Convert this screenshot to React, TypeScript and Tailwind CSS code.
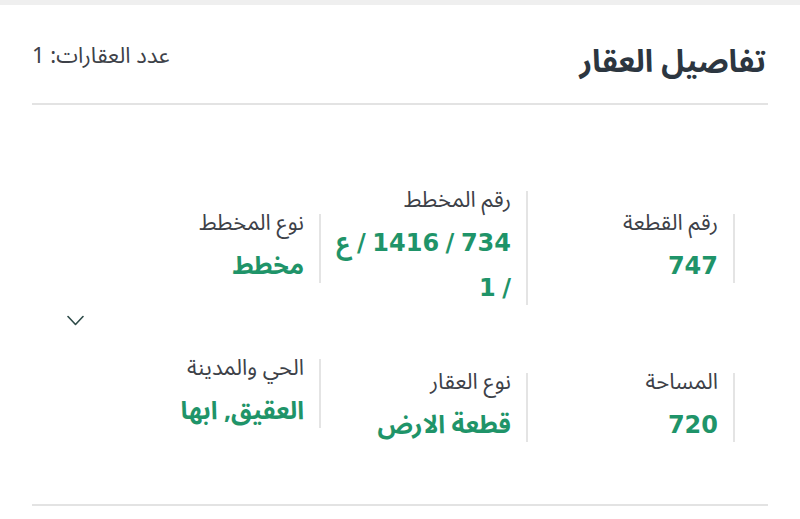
import React from "react";

type Field = { label: string; value: string; shift?: string };

const rows: Field[][] = [
  [
    { label: "رقم القطعة", value: "747" },
    { label: "رقم المخطط", value: "734 / 1416 / ع /\u00a01" },
    { label: "نوع المخطط", value: "مخطط" },
  ],
  [
    { label: "المساحة", value: "720" },
    { label: "نوع العقار", value: "قطعة الارض" },
    { label: "الحي والمدينة", value: "العقيق, ابها", shift: "mb-[28px]" },
  ],
];

// digits and slashes use a wider latin face, arabic stays in Noto
const Value: React.FC<{ text: string }> = ({ text }) => (
  <>
    {text.split(/([0-9/]+)/).map((part, i) =>
      /[0-9/]/.test(part) ? (
        <span key={i} className="font-['DejaVu_Sans',sans-serif] text-[24px]">
          {part}
        </span>
      ) : (
        <span key={i}>{part}</span>
      )
    )}
  </>
);

const Cell: React.FC<{ field: Field }> = ({ field }) => (
  <div className={`flex items-stretch ${field.shift ?? ""}`}>
    {/* divider on the start side */}
    <div className="w-[2px] shrink-0 bg-[#e4e4e4] my-[6px]" />
    <div className="ps-[15px] pe-1 w-[196px]">
      <div className="text-[22px] leading-[30px] text-[#3d4148]">{field.label}</div>
      <div className="mt-[6px] text-[25px] leading-[45px] font-bold text-[#1f9469]">
        <Value text={field.value} />
      </div>
    </div>
  </div>
);

const Chevron = () => (
  <svg width="17" height="11" viewBox="0 0 17 11" fill="none" className="text-[#2d4a48]">
    <polyline
      points="1,1.5 8.5,9.5 16,1.5"
      stroke="currentColor"
      strokeWidth="1.6"
      strokeLinecap="round"
      strokeLinejoin="round"
    />
  </svg>
);

const App: React.FC = () => {
  return (
    <div
      dir="rtl"
      className="w-[800px] h-[519px] bg-white flex flex-col font-['Noto_Sans_Arabic','DejaVu_Sans',sans-serif]"
    >
      <div className="h-[5px] bg-[#efefef]" />

      <div className="mx-8 flex-1 flex flex-col">
        {/* header */}
        <div className="flex items-start justify-between pt-[34px] pb-[18px] border-b-2 border-[#e3e3e3] ps-[2px]">
          <h2 className="text-[31px] leading-[46px] font-bold text-[#2c3640]">تفاصيل العقار</h2>
          <span className="text-[22px] leading-[30px] text-[#3d4148] mt-[2px]">عدد العقارات: 1</span>
        </div>

        {/* details */}
        <div className="flex-1 flex border-b-2 border-[#e3e3e3] ps-[33px]">
          <div className="w-[621px] flex flex-col pt-[80px] gap-[42px]">
            {rows.map((row, i) => (
              <div key={i} className="grid grid-cols-3 items-center">
                {row.map((f) => (
                  <Cell key={f.label} field={f} />
                ))}
              </div>
            ))}
          </div>
          <div className="flex-1 flex justify-center pt-[210px] pe-[4px]">
            <Chevron />
          </div>
        </div>
      </div>
      <div className="h-[13px]" />
    </div>
  );
};

export default App;
